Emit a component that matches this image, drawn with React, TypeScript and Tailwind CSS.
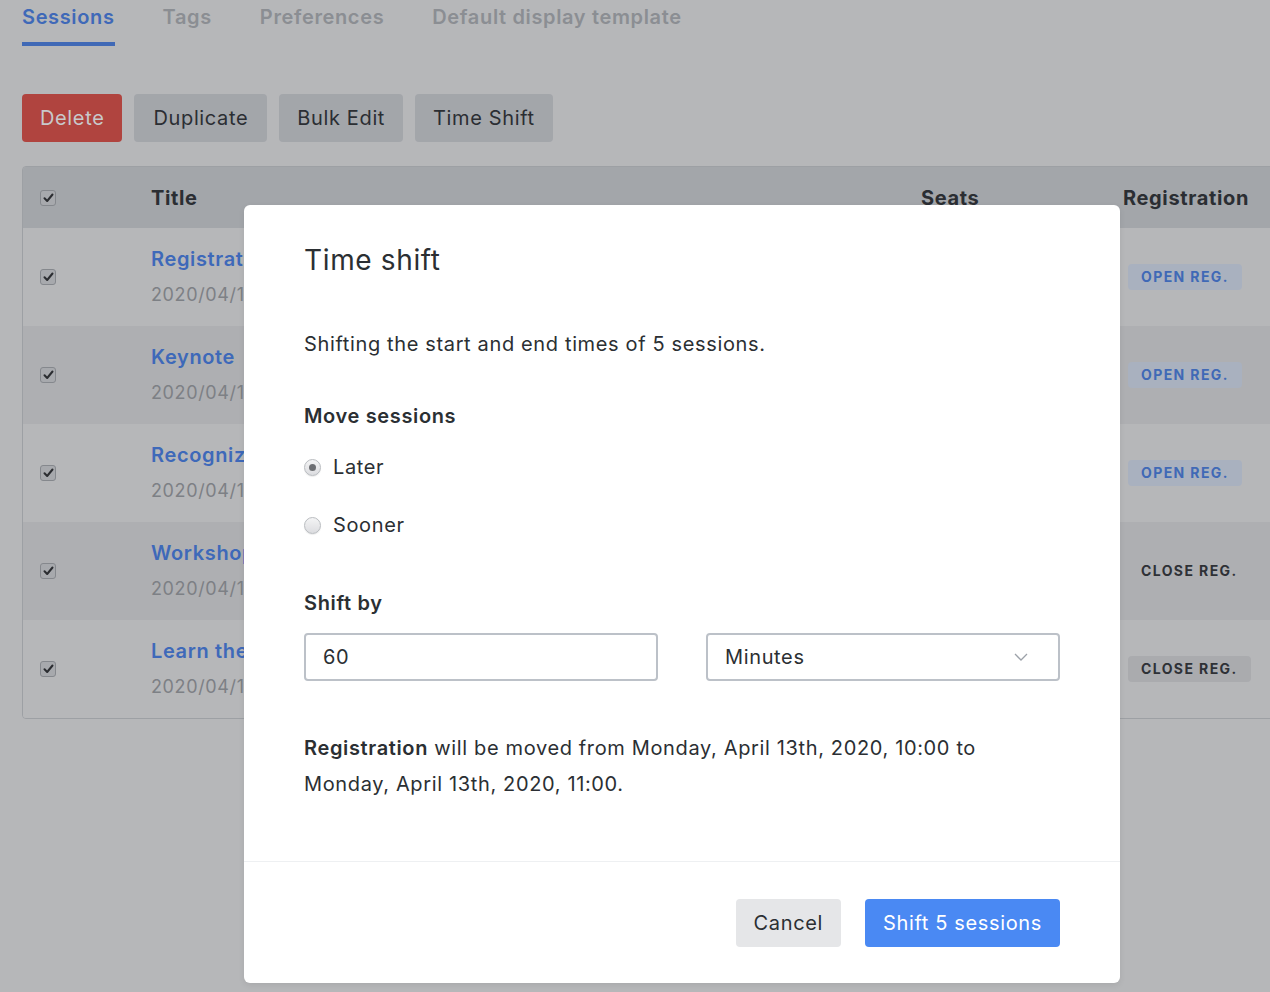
import React from 'react'

const rows = [
  { title: 'Registration', date: '2020/04/13', reg: 'open', bg: 'bg-[#b6b7b9]' },
  { title: 'Keynote', date: '2020/04/13', reg: 'open', bg: 'bg-[#aeafb2]' },
  { title: 'Recognizing', date: '2020/04/13', reg: 'open', bg: 'bg-[#b6b7b9]' },
  { title: 'Workshop', date: '2020/04/13', reg: 'close', bg: 'bg-[#aeafb2]' },
  { title: 'Learn the', date: '2020/04/14', reg: 'closeBadge', bg: 'bg-[#b6b7b9]' },
]

function Check() {
  return (
    <span className="flex h-[16px] w-[16px] items-center justify-center rounded-[3px] border border-[#85888d] bg-[#a7a9ad]">
      <svg width="11" height="10" viewBox="0 0 11 10">
        <path d="M1.5 5.2 L4.2 8 L9.5 1.5" fill="none" stroke="#2b2d31" strokeWidth="2" strokeLinecap="round" strokeLinejoin="round" />
      </svg>
    </span>
  )
}

function Radio({ checked }: { checked?: boolean }) {
  return (
    <span className="flex h-[17px] w-[17px] items-center justify-center rounded-full border border-[#b9bcc0] bg-gradient-to-b from-[#f4f4f5] to-[#dcdde0] shadow-[0_1px_1px_rgba(0,0,0,0.08)]">
      {checked && <span className="h-[7px] w-[7px] rounded-full bg-[#6d6f73]" />}
    </span>
  )
}

export default function App() {
  return (
    <div className="relative h-[992px] w-[1270px] overflow-hidden bg-[#b6b7b9] font-['Inter','Liberation_Sans',sans-serif] tracking-[0.04em] text-[#2b2e33]">
      {/* tabs */}
      <div className="flex gap-[48px] pl-[22px] text-[20px] font-semibold">
        <div className="flex flex-col">
          <span className="leading-[34px] text-[#3f69b8]">Sessions</span>
          <span className="mt-[8px] h-[4px] bg-[#4069b6]" />
        </div>
        <span className="leading-[34px] text-[#8b8e93]">Tags</span>
        <span className="leading-[34px] text-[#8b8e93]">Preferences</span>
        <span className="leading-[34px] text-[#8b8e93]">Default display template</span>
      </div>

      {/* actions */}
      <div className="mt-[48px] flex gap-[12px] pl-[22px] text-[20px]">
        <button className="h-[48px] rounded-[4px] bg-[#b0443f] px-[18px] text-[#c8c9cb]">Delete</button>
        <button className="h-[48px] rounded-[4px] bg-[#a3a6aa] px-[19px]">Duplicate</button>
        <button className="h-[48px] rounded-[4px] bg-[#a3a6aa] px-[18px]">Bulk Edit</button>
        <button className="h-[48px] rounded-[4px] bg-[#a3a6aa] px-[18px]">Time Shift</button>
      </div>

      {/* table */}
      <div className="ml-[22px] mt-[24px] w-[1320px] overflow-hidden rounded-[4px] border border-[#9da0a4]">
        <div className="grid h-[61px] grid-cols-[128px_770px_202px_1fr] items-center bg-[#a3a6aa] text-[20px] font-bold">
          <span className="pl-[17px]"><Check /></span>
          <span>Title</span>
          <span>Seats</span>
          <span>Registration</span>
        </div>
        {rows.map((r, i) => (
          <div key={i} className={`grid h-[98px] grid-cols-[128px_770px_202px_1fr] items-center ${r.bg}`}>
            <span className="pl-[17px]"><Check /></span>
            <div className="flex flex-col gap-[8px]">
              <span className="text-[20px] font-semibold leading-[28px] text-[#3e69b9]">{r.title}</span>
              <span className="text-[18px] leading-[28px] text-[#7d8085]">{r.date} 10:00</span>
            </div>
            <span />
            <div>
              {r.reg === 'open' && (
                <span className="ml-[5px] inline-block rounded-[4px] bg-[#a9b1bf] px-[13px] text-[14px] font-bold leading-[26px] tracking-[0.1em] text-[#4069b6]">OPEN REG.</span>
              )}
              {r.reg === 'close' && (
                <span className="ml-[5px] inline-block px-[13px] text-[14px] font-bold leading-[26px] tracking-[0.1em] text-[#2e3136]">CLOSE REG.</span>
              )}
              {r.reg === 'closeBadge' && (
                <span className="ml-[5px] inline-block rounded-[4px] bg-[#aaabae] px-[13px] text-[14px] font-bold leading-[26px] tracking-[0.1em] text-[#2e3136]">CLOSE REG.</span>
              )}
            </div>
          </div>
        ))}
      </div>

      {/* modal */}
      <div className="absolute left-[244px] top-[205px] w-[876px] rounded-[6px] bg-white text-[#2b2f33] shadow-[0_2px_6px_rgba(0,0,0,0.08)]">
        <div className="px-[60px] pb-[59px] pt-[37px]">
          <h2 className="text-[28px] leading-[36px]">Time shift</h2>
          <p className="mt-[52px] text-[20px] leading-[28px]">Shifting the start and end times of 5 sessions.</p>
          <div className="mt-[44px] text-[20px] font-semibold leading-[28px]">Move sessions</div>
          <label className="mt-[23px] flex items-center gap-[12px] text-[20px] leading-[28px]">
            <Radio checked />
            <span>Later</span>
          </label>
          <label className="mt-[30px] flex items-center gap-[12px] text-[20px] leading-[28px]">
            <Radio />
            <span>Sooner</span>
          </label>
          <div className="mt-[50px] text-[20px] font-semibold leading-[28px]">Shift by</div>
          <div className="mt-[16px] grid grid-cols-2 gap-[48px]">
            <div className="flex h-[48px] items-center rounded-[4px] border-2 border-[#bcc1c8] px-[17px] text-[20px]">60</div>
            <div className="flex h-[48px] items-center justify-between rounded-[4px] border-2 border-[#bcc1c8] pl-[17px] pr-[30px] text-[20px]">
              <span>Minutes</span>
              <svg width="14" height="8" viewBox="0 0 14 8">
                <path d="M1 1 L7 7 L13 1" fill="none" stroke="#9ca1a9" strokeWidth="1.3" />
              </svg>
            </div>
          </div>
          <p className="mt-[49px] text-[20px] leading-[36px]">
            <strong className="font-semibold">Registration</strong> will be moved from Monday, April 13th, 2020, 10:00 to Monday, April 13th, 2020, 11:00.
          </p>
        </div>
        <div className="flex justify-end gap-[24px] border-t border-[#eef0f2] px-[60px] pb-[36px] pt-[37px] text-[20px]">
          <button className="h-[48px] rounded-[4px] bg-[#e5e6e8] px-[18px]">Cancel</button>
          <button className="h-[48px] rounded-[4px] bg-[#4a89f3] px-[18px] text-white">Shift 5 sessions</button>
        </div>
      </div>
    </div>
  )
}
